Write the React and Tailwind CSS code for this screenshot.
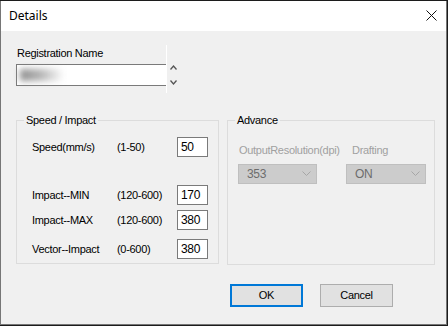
import React from 'react';

const font = { fontFamily: '"Liberation Sans", Arial, sans-serif' };

function NumBox({ value }) {
  return (
    <div className="w-[31px] h-[20px] border border-[#7a7a7a] bg-white pl-[3px] text-[12px] leading-[18px] text-black">
      {value}
    </div>
  );
}

function Row({ label, range, value, className = '' }) {
  return (
    <div className={`flex items-center h-[20px] ${className}`}>
      <div className="w-[85px]">{label}</div>
      <div className="w-[60px]">{range}</div>
      <NumBox value={value} />
    </div>
  );
}

function GroupBox({ title, className = '', children }) {
  return (
    <div className={`relative border border-[#dcdcdc] ${className}`}>
      <span className="absolute -top-[7px] left-[7px] px-[2px] bg-[#f0f0f0] leading-[13px] text-black">
        {title}
      </span>
      {children}
    </div>
  );
}

function DisabledCombo({ value, className = '' }) {
  return (
    <div className={`flex items-center justify-between h-[20px] border border-[#bfbfbf] bg-[#cccccc] pl-[8px] pr-[5px] text-[#6d6d6d] ${className}`}>
      <span className="text-[12px]">{value}</span>
      <svg width="9" height="6" viewBox="0 0 9 6" fill="none">
        <path d="M0.5 0.5 L4.5 4.5 L8.5 0.5" stroke="#a6a6a6" strokeWidth="1" />
      </svg>
    </div>
  );
}

export default function App() {
  return (
    <div className="w-[448px] h-[326px] bg-[#1c1c1c] pt-[1px] overflow-hidden" style={font}>
      <div className="w-[447px] h-[324px] border-l border-r border-b border-[#767676] flex flex-col text-[11px] tracking-[-0.3px] text-black">
        <div className="h-[30px] bg-white flex items-center justify-between pl-[8px] pr-[8px]">
          <span className="text-[12px] tracking-normal pb-[1px]" style={{ fontFamily: '"Segoe UI", "Noto Sans", sans-serif' }}>
            Details
          </span>
          <svg width="11" height="11" viewBox="0 0 11 11" className="mr-[1px] mb-[1px]">
            <path d="M0.5 0.5 L10.5 10.5 M10.5 0.5 L0.5 10.5" stroke="#111" strokeWidth="1" />
          </svg>
        </div>
        <div className="flex-1 bg-[#f0f0f0] pl-[15px] relative">
          <div className="mt-[16px] leading-[13px] pl-[1px]">Registration Name</div>
          <div className="flex items-center mt-[4px]">
            <div className="w-[151px] h-[22px] border border-[#7a7a7a] bg-white flex items-center">
              <div className="ml-[3px] w-[44px] h-[12px] bg-gradient-to-r from-[#8f8f8f] via-[#b8b8b8] to-transparent blur-[3px]" />
            </div>
            <div className="ml-[3px] flex flex-col justify-between h-[22px] py-[1px]">
              <svg width="7" height="5" viewBox="0 0 7 5" fill="none">
                <path d="M0.5 4.5 L3.5 1 L6.5 4.5" stroke="#555" strokeWidth="1.3" />
              </svg>
              <svg width="7" height="5" viewBox="0 0 7 5" fill="none">
                <path d="M0.5 0.5 L3.5 4 L6.5 0.5" stroke="#555" strokeWidth="1.3" />
              </svg>
            </div>
          </div>
          <div className="absolute left-[165px] top-[14px] w-[1px] h-[48px] bg-white" />

          <div className="flex items-start mt-[34px]">
            <GroupBox title="Speed / Impact" className="w-[203px] h-[144px] pl-[15px]">
              <Row className="mt-[16px]" label="Speed(mm/s)" range="(1-50)" value="50" />
              <Row className="mt-[28px]" label="Impact--MIN" range="(120-600)" value="170" />
              <Row className="mt-[5px]" label="Impact--MAX" range="(120-600)" value="380" />
              <Row className="mt-[9px]" label="Vector--Impact" range="(0-600)" value="380" />
            </GroupBox>
            <GroupBox title="Advance" className="ml-[8px] w-[208px] h-[145px] pl-[10px]">
              <div className="flex mt-[23px] leading-[13px] text-[#a0a0a0]">
                <div className="w-[114px] pl-[1px]">OutputResolution(dpi)</div>
                <div>Drafting</div>
              </div>
              <div className="flex mt-[7px]">
                <DisabledCombo value="353" className="w-[79px]" />
                <DisabledCombo value="ON" className="ml-[29px] w-[80px]" />
              </div>
            </GroupBox>
          </div>

          <div className="flex mt-[19px] pl-[214px]">
            <button className="w-[73px] h-[23px] border-2 border-[#0078d7] bg-[#e1e1e1] text-[11px] leading-none">
              OK
            </button>
            <button className="ml-[17px] w-[73px] h-[23px] border border-[#adadad] bg-[#e1e1e1] text-[11px] leading-none">
              Cancel
            </button>
          </div>
        </div>
      </div>
    </div>
  );
}
